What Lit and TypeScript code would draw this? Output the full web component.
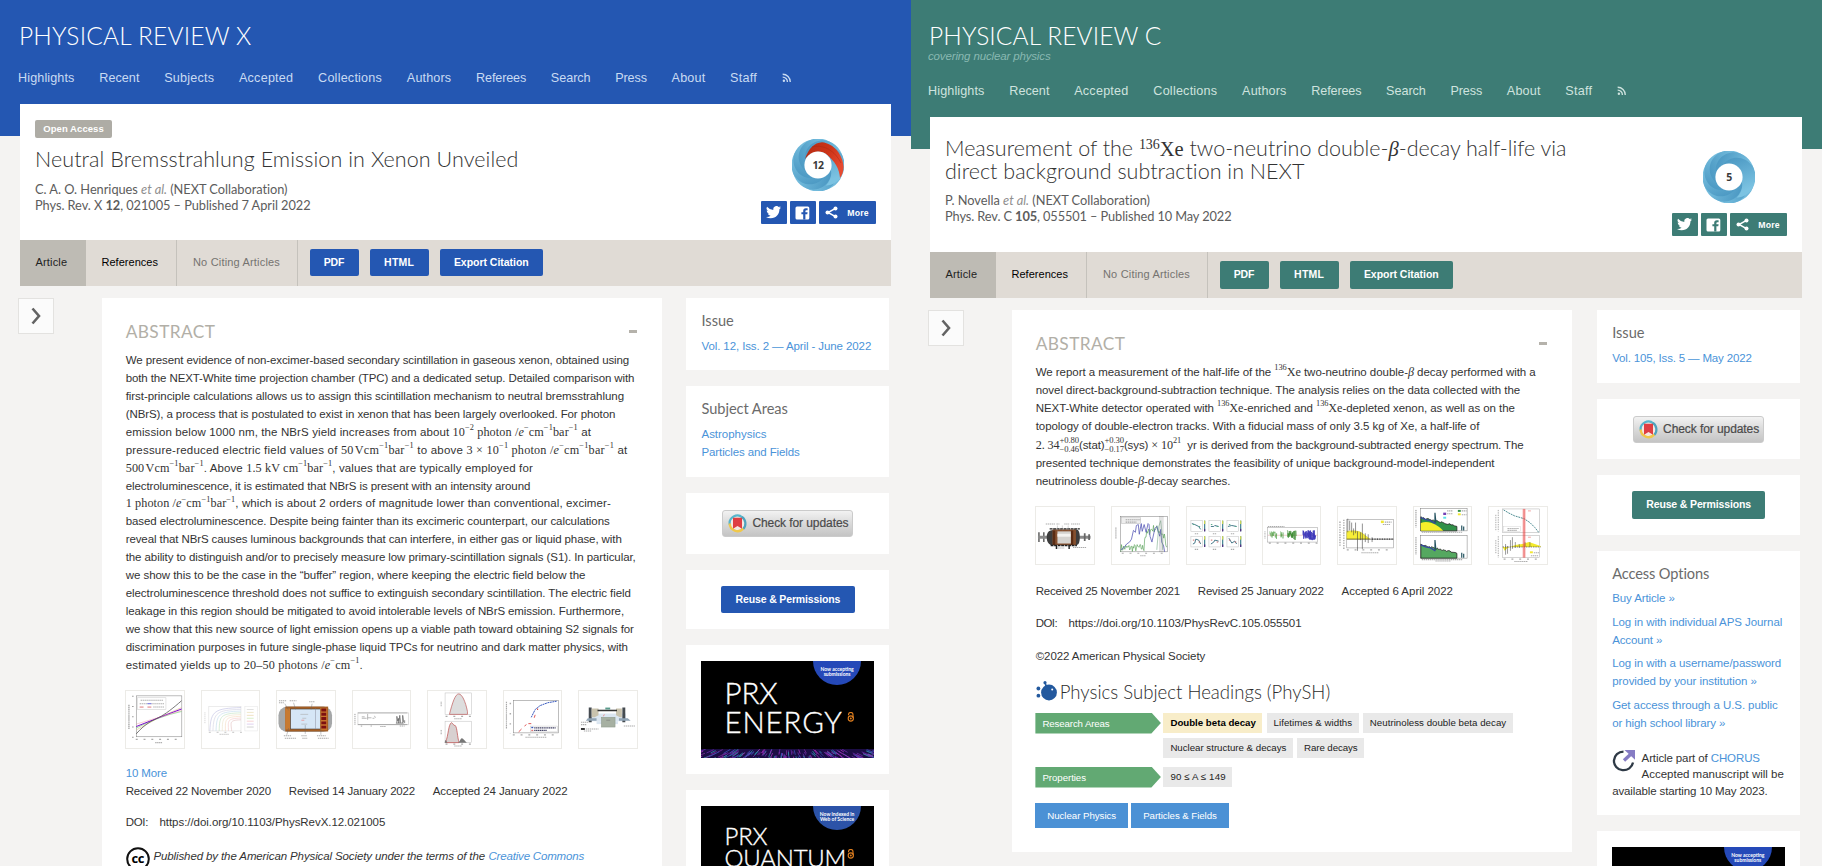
import { LitElement, html, svg, css, nothing } from "lit";
import { customElement, property } from "lit/decorators.js";

/* One line of text tracked so that it fills a measure of `w` pixels. */
@customElement("fit-line")
class FitLine extends LitElement {
  @property({ type: Number }) w = 0;
  static styles = css`
    :host { display: inline-block; white-space: nowrap; vertical-align: top; flex: none; }
    .in { display: inline-block; white-space: nowrap; }
  `;
  firstUpdated() {
    if (!this.w) return;
    const el = this.renderRoot.querySelector(".in") as HTMLElement;
    const n = Math.max(1, (this.textContent || "").replace(/\s+/g, " ").trim().length);
    let spacing = 0;
    for (let i = 0; i < 3; i++) {
      spacing += (this.w - el.getBoundingClientRect().width) / n;
      el.style.letterSpacing = spacing.toFixed(4) + "px";
    }
    this.style.width = this.w + "px";
  }
  render() { return html`<span class="in"><slot></slot></span>`; }
}

const fit = (w: number, content: unknown, cls = "") =>
  html`<fit-line class=${cls} .w=${w}>${content}</fit-line>`;

const noise = (seed: number) => {
  let s = seed;
  return () => ((s = (s * 16807) % 2147483647) / 2147483647);
};
const jag = (seed: number, x0: number, x1: number, step: number, f: (t: number, r: number) => number) => {
  const r = noise(seed);
  const pts: string[] = [];
  for (let x = x0; x <= x1; x += step) pts.push(`${x.toFixed(1)},${f((x - x0) / (x1 - x0), r()).toFixed(1)}`);
  return pts.join(" ");
};

/* ---------- figures ---------- */
const frame = (x: number, y: number, w: number, h: number, c = "#777") =>
  svg`<rect x=${x} y=${y} width=${w} height=${h} fill="none" stroke=${c} stroke-width=".5"/>`;
const ticks = (x: number, y: number, w: number, c = "#888") =>
  svg`<path d=${`M${x} ${y}h${w}`} stroke=${c} stroke-width="1.2" stroke-dasharray="2 6" opacity=".7"/>`;
const label = (x: number, y: number, w: number) =>
  svg`<path d=${`M${x} ${y}h${w}`} stroke="#888" stroke-width="1.1" stroke-dasharray="1.4 .6" opacity=".7"/>`;

const figsX = [
  svg`${frame(10.5, 5, 46.8, 42)}${ticks(10, 49.6, 48)}${label(30, 53, 7)}
    <path d="M3 14v25" stroke="#999" stroke-width="1.2" stroke-dasharray="1.4 .6"/><path d="M7 5v43" stroke="#999" stroke-width="1.5" stroke-dasharray="1 9.5"/>
    <path d="M10.5 38Q34 26 57 21" stroke="#6c6" stroke-width=".6" fill="none"/><path d="M10.5 40Q34 26 57 17" stroke="#db8" stroke-width=".6" fill="none"/>
    <path d="M10.5 36.5Q34 27 57 18.5" stroke="#70c" stroke-width="1" fill="none"/><path d="M10.5 34Q34 27 57 20" stroke="#e9a" stroke-width=".5" fill="none"/>
    <path d="M10.5 44C20 33 28 30 34 27S48 18 57 10" stroke="#555" stroke-width=".8" fill="none"/>
    <rect x="12" y="7" width="29" height="12" fill="#fff" stroke="#bbb" stroke-width=".4"/>${label(15, 9.5, 23)}${label(14, 13, 25)}
    <path d="M14 16.5h4m4 0h4" stroke="#d77"/><path d="M22 13h4" stroke="#77e"/>${label(28, 16.5, 11)}`,
  svg`<g opacity=".55">${frame(7, 16, 33, 25, "#bbb")}${ticks(7, 42.5, 34)}
    ${["#88c", "#aac", "#8bd", "#8c8", "#dc9", "#eb8", "#e99", "#c88"].map((c, i) =>
      svg`<path d=${`M${8 + i * 3.2} ${41}C${9 + i * 3} ${20 + i * 1.8} ${13 + i * 2} ${18 + i * 1.7} 40 ${17 + i * 1.8}`} fill="none" stroke=${c} stroke-width=".6"/>`)}
    ${frame(44, 16, 13, 25, "#ccc")}${[19, 22, 25, 28, 31, 34, 37].map((y, i) => svg`<path d=${`M46 ${y}h7`} stroke=${["#bbb", "#dc8", "#db7", "#ad8", "#e99", "#b9d", "#999"][i]} stroke-width=".8"/>`)}
    ${label(18, 44.5, 10)}<path d="M3 22v12" stroke="#aaa" stroke-dasharray="1 1"/></g>`,
  svg`<rect x="1.5" y="16" width="55" height="26" rx="9" fill="#a5a7a8"/><rect x="8.5" y="16" width="44" height="25.5" fill="#a55f25"/>
    <rect x="8.5" y="18" width="5" height="21.5" fill="#c87a30"/><rect x="14" y="18.5" width="30.5" height="20.5" fill="#d6e6f6" stroke="#444" stroke-width=".6"/>
    <rect x="44.5" y="17.5" width="7" height="22.5" fill="#c8762c"/><path d="M48 18v22" stroke="#7c1010" stroke-width="5" stroke-dasharray="3 1.4"/>
    <path d="M39.500 18v21" stroke="#889" stroke-width=".5"/><path d="M24 24h8M26 28h4M25 34h6" stroke="#aaa" stroke-width=".6"/><path d="M25 30h3" stroke="#e88" stroke-width=".8"/>
    ${label(2, 10, 8)}${label(13, 10, 7)}${label(33, 11, 6)}${label(2, 12, 5)}${label(7, 46, 8)}${label(25, 46, 6)}${label(41, 46, 9)}${label(8, 48.500, 12)}${label(26, 48.500, 5)}${label(42, 48.500, 11)}
    <path d="M8 13l4 7M17 12l2 7M36 13l-1 6M12 38l-2 7M29 35v9M45 38v7" stroke="#666" stroke-width=".4"/>`,
  svg`<path d="M5 22.500h51M5 34.500h51" stroke="#666" stroke-width=".6"/><path d="M5 22v13M57 22v13" stroke="#aaa" stroke-width=".4"/><path d="M2 23.500v11" stroke="#888" stroke-dasharray="1 1"/>
    <path d="M9 26.500h3m3-3v6m0-2h4m3-2l1 2M9 28h5m6 0h2" stroke="#888" stroke-width=".6" fill="none"/>
    <path d="M45 33v-7l1 5 1-3v5l1-8 1 8m2 0v-8l1 7m1-2v3M44 33h8" stroke="#444" stroke-width=".6" fill="none"/>${label(8, 36, 2)}${label(18, 36, 2)}${label(28, 36.500, 6)}${label(48, 36, 5)}`,
  svg`${frame(17.500, 2, 27, 22, "#bbb")}<path d="M22 24C25 12 28 3 31.500 3s7 8 9 18v3z" fill="#ddd" stroke="#b55" stroke-width=".7"/>
    ${ticks(18, 26, 27)}${label(27, 28.500, 8)}<path d="M13.500 11v5" stroke="#999" stroke-dasharray="1 .6"/>
    ${frame(17.500, 31, 27, 22, "#bbb")}<path d="M18 53C21 45 21 34 24 32.500c2 1 2 3 4 3 2 2 2 12 4 17.500z" fill="#d8d0d0" stroke="#b44" stroke-width=".7"/>
    <path d="M31 53c2-1 2-4 3.500-4.500S38 52 40 53zM17 53l1-3 2 3z" fill="#777"/><path d="M13.500 40v5" stroke="#999" stroke-dasharray="1 .6"/>${ticks(18, 54.500, 27)}${label(27, 56.500, 8)}`,
  svg`${frame(10, 10, 46, 33, "#777")}<path d="M28 27l4-8 5-4 8-3 9-1.500" fill="none" stroke="#35b" stroke-width="1" stroke-dasharray="2 .6"/>
    <path d="M15 42l3-3m3-3l2-1.500m2-1h3m3-6l1-3" fill="none" stroke="#d55" stroke-width="1"/><path d="M34.500 19.500v-1.500" stroke="#c33"/>
    <rect x="27" y="36" width="28" height="6" fill="#fff" stroke="#bbb" stroke-width=".4"/><path d="M28 37.500h2" stroke="#35b" stroke-width="1.400"/><path d="M28 40.500h2" stroke="#d77" stroke-width="1.400"/>
    <path d="M31 37.800h22M31 40.500h13" stroke="#446" stroke-width="1.200" stroke-dasharray="1.400 .5"/>${ticks(9, 45, 48)}${label(22, 47.500, 22)}
    <path d="M2.500 11v28" stroke="#aaa" stroke-width="1.200" stroke-dasharray="1.400 .6"/><path d="M6.500 12v32" stroke="#aaa" stroke-width="1.500" stroke-dasharray="1.500 9"/>`,
  svg`<path d="M10 23h38v8H10z" fill="#dbe6f1"/><path d="M18 31h22v3H18z" fill="#dbe6f1"/><path d="M10 17h3v15h-3zM44.500 17h3v15h-3z" fill="#454b50"/><path d="M13 18h7v7l-4 2h-3zM44 18h-6v7l4 2h2z" fill="#c9c3ae"/>
    <path d="M19 20h20" stroke="#333" stroke-width="1.600"/><rect x="27" y="17" width="5" height="2" fill="#5a9b8c"/><path d="M26 24l-1 2" stroke="#e77" stroke-width=".8"/>
    <path d="M9 28h9v2.500H7zM41 28h9l3 2.500H41z" fill="#90a4b5"/><rect x="23" y="27" width="14" height="10" fill="#a6b0a2" stroke="#8a9688" stroke-width=".5"/><path d="M28 30h4" stroke="#777" stroke-width=".6"/>
    ${label(2, 32, 8)}${label(2, 34.500, 6)}<path d="M2 39h4" stroke="#333" stroke-width="2"/>${label(7, 39, 13)}${label(5, 41, 8)}${label(46, 36, 12)}`,
];

const hist = (seed: number, top: number, base: number) => jag(seed, 7, 44, 1, (t, r) => base - (base - top) * (1 - t * 0.62) + r * 1.6);
const figsC = [
  svg`<path d="M3 26v10M8 26v10" stroke="#666" stroke-width="1.600"/><path d="M2 31h13M44 31h12" stroke="#8a8a8a" stroke-width="3"/><path d="M50 27v8M54.500 28v6" stroke="#666" stroke-width="1.800"/>
    <path d="M15 24q-4 1-4 7t4 8h5V23zM39 23v16h3q3-1 3-8t-3-8z" fill="#3d3d3d"/><rect x="17" y="23" width="24" height="16" fill="#85502f"/>
    <rect x="22" y="25" width="14" height="12.500" fill="#d5d3cf"/><path d="M22 29h14" stroke="#f4f3f0" stroke-width="3"/><path d="M37 24v15M18.500 24v15" stroke="#5a2c14" stroke-width="2.400"/>
    <path d="M14 22.500h31M15 39.500h27" stroke="#222" stroke-width="1.400" stroke-dasharray="3 .6"/><path d="M21 40v3M34 40v3" stroke="#222" stroke-width="1.500"/>
    <path d="M22 19v5M27 19v5M33 19v5" stroke="#999" stroke-width=".4"/>${label(10, 17.500, 10)}${label(21, 17.500, 3)}${label(29, 17.500, 5)}${label(36, 17.500, 9)}${label(22, 42, 7)}${label(38, 41.500, 14)}`,
  svg`${frame(8.500, 10, 48.500, 36, "#777")}<polyline points=${jag(7, 9, 57, .7, (t, r) => (t > .5 && t < .95 ? 33 - 10 * Math.sin((t - .5) * 7) : 43) - r * 8 + 3)} fill="none" stroke="#4a9a4a" stroke-width=".6"/>
    <polyline points="9,44 12,42 15,38 18,36 20,33 22,24 24,26 25,19 27,18 28,28 30,17 31,25 33,18 35,26 37,17 38,18 39,30 41,36 44,22 46,20 48,27 49,30 50,23 51,36 53,40 54,46" fill="none" stroke="#5558b5" stroke-width=".8"/>
    <path d="M46 44l2-24 2-6 1 10 1 20" fill="none" stroke="#7a8" stroke-width=".6"/><rect x="48.500" y="10" width="4" height="36" fill="#888" opacity=".22" stroke="#444" stroke-width=".5"/>
    <rect x="9.500" y="11" width="20" height="6" fill="#eee" stroke="#aaa" stroke-width=".4"/>${label(14, 13, 15)}${label(14, 15.500, 11)}${ticks(10, 47.500, 46)}${label(29, 50, 6)}<path d="M4 21v12" stroke="#999" stroke-dasharray="1.400 .6"/>`,
  svg`${[0, 1, 2].map(i => [0, 1].map(j => svg`<g transform=${`translate(${4 + i * 18.5} ${14 + j * 16})`}>${frame(0, 0, 12, 11, "#bbb")}
    <path d=${j ? ["M2 8l2-1 1-4 3 1 2 4", "M2 8l3-2 1-2 4 1", "M2 2l3 5 3-2 2 3"][i] : ["M1 3l3 1 4 2 2 3", "M2 6h3l1-1 4 1", "M1 6l4-1 5 1"][i]} fill="none" stroke="#478" stroke-width="1"/>
    <path d="M2 4h1.500M8 6h1.500" stroke=${j ? "#c66" : "#5a8"}/><rect x="13.500" y="0" width="1.200" height="11" fill="#3b7f8c"/><rect x="13.500" y="0" width="1.200" height="3.500" fill="#d8dc50"/><rect x="13.500" y="8.500" width="1.200" height="2.500" fill="#54287e"/>${label(4, 13.500, 4)}</g>`))}`,
  svg`${frame(4.500, 21, 51.500, 15, "#999")}<path d="M5 29h51" stroke="#d99" stroke-width=".5"/>
    <polyline points=${jag(3, 7, 14, .25, (_t, r) => 25 + r * 8)} fill="none" stroke="#4b9b3f" stroke-width=".5"/><polyline points=${jag(5, 18, 21, .25, (_t, r) => 25 + r * 8)} fill="none" stroke="#4b9b3f" stroke-width=".5"/>
    <polyline points=${jag(8, 25, 34, .2, (_t, r) => 24 + r * 10)} fill="none" stroke="#3b8b30" stroke-width=".7"/><polyline points=${jag(11, 41, 54, .2, (_t, r) => 24 + r * 10)} fill="none" stroke="#3a35b8" stroke-width=".8"/>
    ${label(5, 20, 17)}${ticks(6, 37, 50)}<path d="M2 25v8" stroke="#aaa" stroke-dasharray="1 .6"/>`,
  svg`${frame(9, 13, 48, 29, "#888")}<path d="M9 33V25q4-1 8-.5 6 0 10 4l6 4.500z" fill="#f7ee37" stroke="#c9bf2c" stroke-width=".4"/><path d="M9 33h48" stroke="#222" stroke-width=".6"/>
    <path d="M10 12v14M12 14v10M14 16v10M16 22v7M18 16v11M20 25v20M23 26v8M25 17v26M28 27v9M31 28v9M35 31v5" stroke="#444" stroke-width=".6"/><path d="M35 33h22" stroke="#333" stroke-width="1.200" stroke-dasharray="1 1.500"/>
    <rect x="44" y="14" width="3" height="2.500" fill="#f2e733"/>${label(48, 15.500, 7)}${label(46, 18, 8)}${ticks(9, 44, 48)}${label(24, 47, 18)}<path d="M2 15v26M6 13v30" stroke="#999" stroke-width="1.200" stroke-dasharray="1.400 1.200"/>`,
  svg`${[0, 28].map((y, k) => svg`<g transform=${`translate(0 ${y})`}>${frame(6.500, 1.500, 48, 23, "#777")}
    <polygon points=${`7,24.5 ${hist(9 + k, 10, 24)} 44,24.5`} fill=${k ? "#55a860" : "#319149"} stroke="#222" stroke-width=".8"/>
    <path d="M7 11l5 2 5 1 5 3" stroke="#3846a0" stroke-width="1.400" fill="none"/>${k ? nothing : svg`<path d="M7 24.500v-8q5-2 11 0 8 3 12 8z" fill="#f6ef29"/>`}
    <path d="M21.500 16V6l1 10M49 24v-5M51 24v-4" stroke="#23525f" stroke-width="1.200" fill="none"/>${label(8, 26, 42)}<path d="M2 3v18" stroke="#888" stroke-dasharray="1.400 .8"/></g>`)}
    <path d="M30 7h3" stroke="#7340b5" stroke-width="2.400"/><path d="M30 11h3" stroke="#5ce1e8" stroke-width="2"/><path d="M45 4h3" stroke="#319149" stroke-width="2"/><path d="M45 7.500h3" stroke="#f2e733" stroke-width="2"/>${label(34, 7, 6)}${label(49, 4, 5)}${label(34, 4, 6)}${label(49, 8, 5)}${label(22, 55.500, 16)}`,
  svg`${frame(14, 2, 38, 24, "#aaa")}<path d="M15 3l5 3 6 3 10 3 6 4 5 5 4 5" fill="none" stroke="#4a8a90" stroke-width="1" stroke-dasharray="2 .8"/>
    <rect x="15" y="20" width="17" height="5" fill="#fff" stroke="#ccc" stroke-width=".4"/>${label(19, 22, 12)}${label(19, 24, 10)}${frame(14, 29, 38, 23, "#aaa")}
    <path d="M14 41l2 4 3-3 8-3 7-1 7-2 6 2 6 2v1z" fill="#f3ea2c"/><path d="M14 41h39" stroke="#555" stroke-width=".8" stroke-dasharray="1.400 1"/><path d="M17 38v11M19 40v8M22 34v11M24 31v12M27 36v6M31 38v4M37 36v5M42 36v5" stroke="#555" stroke-width=".6"/>
    <rect x="34.500" y="2" width="3" height="50" fill="#f05050" opacity=".45"/><path d="M36 2v50" stroke="#d33" stroke-width=".5"/><path d="M40 4h3M40 31h3" stroke="#f3a3a3"/>
    <rect x="42" y="45.500" width="3" height="2" fill="#f2e733"/>${label(46, 47, 6)}${label(43, 50, 8)}${ticks(15, 53.500, 38)}${label(26, 56, 14)}<path d="M7 8v16M9.500 3v22M7 34v14M9.500 30v22" stroke="#aaa" stroke-dasharray="1.400 1"/>`,
];

/* ---------- icons ---------- */
const rss = html`<svg class="rss" viewBox="0 0 10 10"><circle cx="2" cy="8.200" r="1.300"/><path d="M.7 4.300A5 5 0 0 1 5.700 9.400M.7 1.300A8 8 0 0 1 8.700 9.400" fill="none" stroke="currentColor" stroke-width="1.400"/></svg>`;
const twitter = html`<svg width="15" height="12.500" viewBox="0 0 24 20"><path fill="#fff" d="M24 2.400a10 10 0 0 1-2.800.8A5 5 0 0 0 23.300.5a10 10 0 0 1-3.100 1.200A4.900 4.900 0 0 0 11.800 6.200 14 14 0 0 1 1.700 1a4.900 4.900 0 0 0 1.500 6.600A5 5 0 0 1 1 7v.1A4.900 4.900 0 0 0 4.900 12a5 5 0 0 1-2.200 0A4.900 4.900 0 0 0 7.300 15.500 10 10 0 0 1 0 17.500 14 14 0 0 0 7.500 19.700c9.100 0 14.300-7.700 14-14.700A10 10 0 0 0 24 2.400z"/></svg>`;
const facebook = html`<svg width="15" height="14" viewBox="0 0 15 14"><rect x=".5" y=".5" width="13.800" height="13" rx="1.500" fill="#fff"/><path d="M8.200 13.500V8.300H6.400V6.200h1.800V4.800q0-2.500 2.600-2.500h1.800v2h-1.300q-.9 0-.9.900v1h2.200l-.3 2.100h-1.900v5.200z" fill="var(--accent)"/></svg>`;
const share = html`<svg width="13" height="13" viewBox="0 0 13 13"><path d="M10.500 2.300 3 6.500l7.500 4.200" fill="none" stroke="#fff" stroke-width="1.500"/><g fill="#fff"><circle cx="2.500" cy="6.500" r="2"/><circle cx="10.500" cy="2.400" r="2"/><circle cx="10.500" cy="10.600" r="2"/></g></svg>`;

const donut = (score: string, red: boolean) => html`<svg class="donut" viewBox="-26 -26 52 52">
  <defs>
    <linearGradient id="b" x1="0" y1="0" x2="1" y2=".4"><stop offset="0" stop-color="#4593bf"/><stop offset="1" stop-color="#7cc3e2"/></linearGradient>
    <linearGradient id="r" x1="0" y1="0" x2="1" y2=".5"><stop offset="0" stop-color="#b42c14"/><stop offset=".6" stop-color="#cd3418"/><stop offset="1" stop-color="#e64a30"/></linearGradient>
  </defs>
  <circle r="24.700" fill="#62add2"/>
  ${[2, 3, 4, 5, 6, 7, 8, 9].map(i => svg`<path transform=${`rotate(${i * 45})`} d="M-13-3C-15-17-4-26 8-24.500 17-23 25-14 25.400-4 25 2 22 7 20 9 20-4 8-15-13-3z" fill="url(#b)"/>`)}
  ${red ? svg`<path d="M-13-6C-9-17-4-22 4-22.700 16-21.500 25-10 25.600 2 25.400 6 24.500 10 22 13 21.500 4 17-4 8-11 2-15-6-14-13-6z" fill="url(#r)"/><path d="M-6-18C6-21 17-14 23-2" fill="none" stroke="#a82712" stroke-width=".8" opacity=".6"/>` : nothing}
  <circle r="13.600" fill="#fff"/><text y="4" text-anchor="middle" class="score">${score}</text></svg>`;

const crossmark = html`<svg class="cm" viewBox="0 0 19 19"><circle cx="9.400" cy="9.300" r="7" fill="#f4e8e2"/><path d="M1.700 10.500A7.800 7.800 0 0 1 14.500 3.500" fill="none" stroke="#57b5cc" stroke-width="2.200"/><path d="M14 3a7.900 7.900 0 0 1 1 12.200" fill="none" stroke="#4fa3bd" stroke-width="2.200"/><path d="M1.700 9.500a7.900 7.900 0 0 0 13.600 5.200" fill="none" stroke="#f0c84b" stroke-width="2.400"/><path d="M5 3.800h9v11L9.500 12 5 14.800z" fill="#df3e42"/></svg>`;
const chorus = html`<svg class="chorus" viewBox="0 0 23 22"><path d="M11.500 1.600A9.600 9.300 0 1 0 21 12.500" fill="none" stroke="#2f3a46" stroke-width="2.300"/><path d="M12 10.500 19 4" stroke="#867cc4" stroke-width="3.400"/><path d="M12.500 0H23v9.800z" fill="#867cc4"/></svg>`;
const physh = html`<svg class="physh" viewBox="0 0 21 20"><g fill="#23599e"><circle cx="13" cy="11.500" r="7.900"/><circle cx="2.400" cy="7.500" r="1.900"/><circle cx="2.400" cy="14.700" r="1.900"/><circle cx="9" cy="1.700" r="1.600"/><path d="M8.500 2l4 3-3 2z"/></g><circle cx="16.200" cy="8.500" r="1" fill="#fff"/></svg>`;
const chevron = html`<svg width="12" height="18" viewBox="0 0 12 18"><path d="M2.500 1.500 9 9l-6.500 7.500" fill="none" stroke="#636363" stroke-width="2.600"/></svg>`;
const lock = html`<svg class="lock" viewBox="0 0 8 10"><path d="M1.500 3.200V2.600A2 2 0 0 1 6 2.800V6" fill="none" stroke="#e07f1f" stroke-width="1.100"/><circle cx="3.800" cy="6.500" r="2.600" fill="none" stroke="#e07f1f" stroke-width="1.100"/><circle cx="3.800" cy="6.500" r="1" fill="#e07f1f"/></svg>`;

const burst = () => {
  const r = noise(42);
  return html`<svg class="burst" viewBox="0 0 173 9.500" preserveAspectRatio="none"><rect width="173" height="10" fill="#1c0d45"/>
    ${Array.from({ length: 190 }, () => {
      const x = r() * 173, y = r() * 9, k = (x - 86) / 26, l = 2 + r() * 3;
      return svg`<path d=${`M${x} ${y}l${k * l * 0.8} ${l}`} stroke=${["#a32fb8", "#6b2ba8", "#3b50b5", "#2c8fa6", "#7d2d9b"][Math.floor(r() * 5)]} stroke-width=".8"/>`;
    })}</svg>`;
};

/* ---------- math ---------- */
const m = (c: unknown) => html`<span class="m">${c}</span>`;
const inv = html`<sup>−1</sup>`;
const perE = html`/<i>e</i><sup>−</sup>`;
const xe = m(html`<sup>136</sup>Xe`);
const beta = html`<i class="m">β</i>`;

const abstractX: [number, unknown][] = [
  [503.5, "We present evidence of non-excimer-based secondary scintillation in gaseous xenon, obtained using"],
  [508.7, "both the NEXT-White time projection chamber (TPC) and a dedicated setup. Detailed comparison with"],
  [498.3, "first-principle calculations allows us to assign this scintillation mechanism to neutral bremsstrahlung"],
  [489.6, "(NBrS), a process that is postulated to exist in xenon that has been largely overlooked. For photon"],
  [465.3, html`emission below 1000 nm, the NBrS yield increases from about ${m(html`10<sup>−2</sup> photon ${perE}cm${inv}bar${inv}`)} at`],
  [501.8, html`pressure-reduced electric field values of ${m(html`50&#8202;Vcm${inv}bar${inv}`)} to above ${m(html`3 × 10${inv} photon ${perE}cm${inv}bar${inv}`)} at`],
  [407.2, html`${m(html`500&#8202;Vcm${inv}bar${inv}`)}. Above ${m(html`1.5 kV cm${inv}bar${inv}`)}, values that are typically employed for`],
  [404.6, "electroluminescence, it is estimated that NBrS is present with an intensity around"],
  [485.2, html`${m(html`1 photon ${perE}cm${inv}bar${inv}`)}, which is about 2 orders of magnitude lower than conventional, excimer-`],
  [484, "based electroluminescence. Despite being fainter than its excimeric counterpart, our calculations"],
  [496, "reveal that NBrS causes luminous backgrounds that can interfere, in either gas or liquid phase, with"],
  [510, "the ability to distinguish and/or to precisely measure low primary-scintillation signals (S1). In particular,"],
  [459.7, "we show this to be the case in the “buffer” region, where keeping the electric field below the"],
  [505.2, "electroluminescence threshold does not suffice to extinguish secondary scintillation. The electric field"],
  [498.3, "leakage in this region should be mitigated to avoid intolerable levels of NBrS emission. Furthermore,"],
  [508.2, "we show that this new source of light emission opens up a viable path toward obtaining S2 signals for"],
  [502.2, "discrimination purposes in future single-phase liquid TPCs for neutrino and dark matter physics, with"],
  [237.2, html`estimated yields up to ${m(html`20–50 photons ${perE}cm${inv}`)}.`],
];
const stack = (a: string, b: string) => html`<span class="stack m"><span>${a}</span><span>${b}</span></span>`;
const abstractC: [number, unknown][] = [
  [500, html`We report a measurement of the half-life of the ${xe} two-neutrino double-${beta} decay performed with a`],
  [484.4, "novel direct-background-subtraction technique. The analysis relies on the data collected with the"],
  [479.2, html`NEXT-White detector operated with ${xe}-enriched and ${xe}-depleted xenon, as well as on the`],
  [443.6, "topology of double-electron tracks. With a fiducial mass of only 3.5 kg of Xe, a half-life of"],
  [487.9, html`${m("2. 34")}${stack("+0.80", "−0.46")}(stat)${stack("+0.30", "−0.17")}(sys) ${m(html`× 10<sup>21</sup>`)}&nbsp; yr is derived from the background-subtracted energy spectrum. The`],
  [458.8, "presented technique demonstrates the feasibility of unique background-model-independent"],
  [194.7, html`neutrinoless double-${beta}-decay searches.`],
];

@customElement("journal-page")
class JournalPage extends LitElement {
  @property() kind: "x" | "c" = "x";
  static styles = css`
    :host { display: block; width: 911px; height: 866px; overflow: hidden; font: 11.5px "Liberation Sans", Arial, sans-serif; color: #333; }
    * { box-sizing: border-box; }
    .page { height: 866px; overflow: hidden; }
    .x { --accent: #2457b2; padding-left: 20px; background: linear-gradient(var(--accent) 136px, #f4f3f2 136px); }
    .c { --accent: #3d7c75; padding-left: 19px; background: linear-gradient(var(--accent) 149px, #f4f3f2 149px); }
    header { padding-top: 21px; height: 104px; color: #fff; margin-left: -2px; }
    .c header { height: 117px; }
    .brand { display: block; font: 300 24.500px/30px Lato, sans-serif; margin-left: 1px; }
    .tag { display: block; font: italic 11.500px/12px "Liberation Sans", sans-serif; color: #89b9b2; margin-top: -1px; }
    nav { display: flex; gap: 24.750px; margin-top: 19px; font-size: 12.600px; line-height: 16px; color: #c9dbf2; }
    .c nav { margin-top: 21px; color: #cfe3df; }
    .rss { width: 9.500px; height: 9.500px; margin-top: 2.500px; fill: currentColor; }
    .mast { width: 871px; height: 136px; background: #fff; display: flex; justify-content: space-between; padding: 16px 15.500px 0 15px; }
    .c .mast { width: 872px; height: 135px; padding-top: 20px; }
    .mast-l { display: flex; flex-direction: column; align-items: flex-start; }
    .oa { background: #aeaca5; border-radius: 2px; width: 77px; height: 18px; margin-bottom: 8px; display: flex; justify-content: center; font: bold 9.500px/18px "Liberation Sans", sans-serif; color: #fff; }
    .h1 { font: 300 21.500px/26px Lato, sans-serif; color: #333; }
    .c .h1 { line-height: 22.500px; }
    .h1 .m { font-weight: 400; font-size: 20.500px; line-height: 0; }
    .h1 sup { font-size: 14px; top: -7px; }
    .by { font: 12.800px/16px Lato, sans-serif; color: #5c5c5c; }
    .gap { margin-top: 9px; }
    .c .gap { margin-top: 10px; }
    .by em { color: #8f8f8f; }
    .mast-r { display: flex; flex-direction: column; align-items: center; padding-top: 19px; width: 114.500px; }
    .c .mast-r { padding-top: 14px; }
    .donut { width: 52px; height: 52px; margin-bottom: 10px; flex: none; display: block; }
    .score { font: bold 10.500px "Open Sans", sans-serif; fill: #3a3a3a; letter-spacing: -.5px; }
    .social { display: flex; gap: 2.800px; width: 114.500px; }
    .social span { background: var(--accent); height: 23px; width: 26px; border-radius: 1px; display: flex; align-items: center; justify-content: center; }
    .social .more { width: 57px; gap: 9px; color: #fff; font: bold 8.700px "Liberation Sans", sans-serif; }
    .tabs { width: 871px; height: 46px; background: #e0dbd5; display: flex; font-size: 11px; line-height: 45px; color: #222; }
    .c .tabs { width: 872px; }
    .tab { height: 46px; padding-left: 15.500px; }
    .t1 { width: 65.500px; background: #bebbb4; }
    .t2 { width: 91px; border-right: 1.500px solid #c5c2bc; padding-left: 16px; color: #000; }
    .t3 { width: 121px; border-right: 1.500px solid #c5c2bc; color: #757370; padding-left: 16.500px; }
    .btn { background: var(--accent); border-radius: 2px; color: #fff; font: bold 10.500px/26px "Liberation Sans", sans-serif; height: 27px; display: flex; justify-content: center; margin-top: 9px; }
    .c .btn { height: 28px; line-height: 27px; }
    .bp { width: 49px; margin-left: 12px; } .bh { width: 59.300px; margin-left: 11px; } .be { width: 103px; margin-left: 11px; }
    .cols { display: flex; align-items: flex-start; margin-top: 12px; }
    .toggle { width: 36px; height: 35.500px; margin-left: -2px; background: #fbfbfb; border: 1px solid #e3e2e0; display: flex; align-items: center; justify-content: center; flex: none; }
    .art { width: 560px; margin-left: 47.500px; background: #fff; padding: 24.400px 0 0 24.200px; height: 580px; flex: none; display: flex; flex-direction: column; align-items: flex-start; }
    .c .art { height: 542px; }
    .ah { display: flex; justify-content: space-between; width: 511.500px; height: 28.600px; font: 17.300px/20px Lato, sans-serif; color: #b2afa7; }
    .minus { width: 8px; height: 3px; background: #b5b2ab; margin-top: 7.600px; }
    .ln { line-height: 18px; height: 17.940px; }
    .art .ln { color: #333; }
    .tall { padding-top: 1px; height: 19px; }
    .m { font-family: "Liberation Serif", "Times New Roman", serif; font-size: 12.200px; }
    sup { font-size: 8.300px; line-height: 0; vertical-align: baseline; position: relative; top: -5.500px; }
    .stack { display: inline-flex; flex-direction: column; font-size: 8.600px; line-height: 9px; vertical-align: middle; margin: -3px 0 -1px; }
    .thumbs { display: flex; gap: 15.950px; margin: 16.300px 0 15px -.3px; }
    .c .thumbs { margin-bottom: 17px; margin-top: 16.500px; }
    .thumbs svg { width: 59.500px; height: 58.500px; border: 1.300px solid #ecebe7; background: #fff; display: block; }
    .row { display: flex; height: 18px; line-height: 18px; }
    a { color: #4a93d9; }
    .dates { gap: 17.800px; }
    .doi { gap: 11.300px; margin-top: 13.500px; }
    .c .doi { margin-top: 14px; }
    .cr { margin-top: 15.700px; }
    .cc { margin-top: 15.700px; font-style: italic; gap: 3.500px; }
    .cc svg { width: 24px; height: 24px; flex: none; margin-right: .3px; }
    .cct { font: bold 13px "Open Sans", sans-serif; letter-spacing: -.4px; }
    .ps { height: 24px; margin-top: 14.300px; font: 300 18.600px/24px Lato, sans-serif; color: #2c2c2c; gap: 3px; }
    .physh { width: 21px; height: 20px; margin-top: 1px; }
    .trow { display: flex; gap: 2.500px; margin-left: -.3px; font-size: 9.700px; margin-top: 9px; }
    .green { background: #62a973; color: #fff; width: 125.500px; height: 21px; line-height: 22px; padding-left: 7px; clip-path: polygon(0 0, 116px 0, 100% 50%, 116px 100%, 0 100%); flex: none; }
    .chips { display: flex; flex-wrap: wrap; gap: 5px 4.200px; width: 360px; }
    .chip { background: #e9e9e9; height: 20px; line-height: 20px; padding: 0 6.500px 0 7px; color: #222; }
    .hot { background: #f8edc9; font-weight: bold; color: #000; }
    .blues { display: flex; gap: 3px; margin: 15px 0 0 -.5px; }
    .blue { background: #4b91d5; color: #fff; height: 25px; line-height: 26px; padding: 0 12px; font-size: 9.700px; }
    aside { margin-left: 24.800px; width: 203.200px; display: flex; flex-direction: column; gap: 16px; }
    .c aside { margin-left: 25.500px; }
    .card { background: #fff; padding: 14.300px 0 0 15.200px; }
    .card .h { display: block; font: 14.600px/18px Lato, sans-serif; color: #6b6b6b; margin-bottom: 6.600px; }
    .card .l { display: block; height: 17.700px; line-height: 18px; color: #4a93d9; }
    .i1 { height: 72px; } .i2 { height: 91px; } .i3 { height: 61px; } .i4 { height: 59px; }
    .c .i1 { height: 73px; } .c .i3 { height: 60px; } .c .i4 { height: 60px; }
    .acc { height: 264px; }
    .acc .h { margin-bottom: 6px; }
    .acc .p { margin-bottom: 5.400px; } .acc .p .l { height: 18.100px; }
    .ch { display: flex; margin-top: 16.500px; line-height: 18px; }
    .ch .l, .card .last { height: 16.500px; }
    .card .k { color: #333; }
    .chorus { width: 23px; height: 22px; margin: 1px 6.400px 0 0; flex: none; }
    .mid { padding: 16.500px 0 0; display: flex; justify-content: center; align-items: flex-start; }
    .i4.mid { padding-top: 16px; } .i4 .btn { width: 133.500px; margin: 0; }
    .chk { width: 131px; height: 27px; border: 1px solid #cbcbcb; border-radius: 3px; background: linear-gradient(#f2f2f2, #dcdcdc 45%, #c4c4c4); display: flex; padding: 0 0 0 4.500px; color: #4a4a4a; font: 12px/24px "Liberation Sans", sans-serif; -webkit-text-stroke: .2px #4a4a4a; }
    .cm { width: 19px; height: 19px; margin: 3px 5.500px 0 0; }
    .adp { padding: 16px 0 0 14.800px; height: 129px; flex: none; }
    .ad { width: 173px; height: 97px; background: #000; overflow: hidden; display: flex; flex-direction: column; color: #fff; position: relative; padding: 18px 0 0 23.500px; }
    .ad .a1 { font: 300 29.500px/28px Lato, sans-serif; height: 28px; -webkit-text-stroke: .35px #fff; }
    .ad .a2 { font: 300 29.500px/29px Lato, sans-serif; -webkit-text-stroke: .35px #fff; }
    .ad.quant { padding-top: 18px; }
    .quant .a1 { font-size: 24px; line-height: 24px; height: 22px; } .quant .a2 { font-size: 24px; line-height: 24px; }
    .adl { display: flex; gap: 4.500px; } .lock { width: 8px; height: 10px; margin-top: 5px; }
    .quant .adl { gap: 1px; } .quant .lock { margin-top: 3px; }
    .badge { position: absolute; left: 112px; top: -24px; width: 48px; height: 48px; border-radius: 50%; background: #2549b8; text-align: center; font: bold 5px/5.300px Lato, sans-serif; padding-top: 30px; white-space: nowrap; }
    .quant .badge { background: #2c53a8; }
    .burst { position: absolute; left: 0; bottom: 0; width: 173px; height: 9.500px; }
  `;

  navItems() {
    const w: Record<string, number> = { Highlights: 56.5, Recent: 40.2, Subjects: 50, Accepted: 54.4, Collections: 64, Authors: 44.5, Referees: 50, Search: 39.7, Press: 31.6, About: 33.7, Staff: 26.9 };
    return Object.keys(w).filter(k => this.kind === "x" || k !== "Subjects").map(k => fit(w[k], k));
  }
  chip(w: number, t: string, hot = false) { return html`<span class="chip ${hot ? "hot" : ""}">${fit(w, t)}</span>`; }
  ad(energy: boolean) {
    return html`<div class="card adp"><div class="ad ${energy ? "" : "quant"}">
      <div class="badge">${energy ? html`Now accepting<br>submissions` : html`Now indexed in<br>Web of Science`}</div>
      ${fit(energy ? 53 : 42.5, "PRX", "a1")}<div class="adl">${fit(energy ? 118 : 121.5, energy ? "ENERGY" : "QUANTUM", "a2")}${lock}</div>
      ${energy ? burst() : nothing}</div></div>`;
  }
  render() {
    const x = this.kind === "x";
    return html`<div class="page ${this.kind}">
      <header>${fit(232.5, x ? "PHYSICAL REVIEW X" : "PHYSICAL REVIEW C", "brand")}
        ${x ? nothing : fit(122.5, "covering nuclear physics", "tag")}
        <nav>${this.navItems()}${rss}</nav></header>
      <section class="mast">
        <div class="mast-l">
          ${x ? html`<div class="oa">${fit(60.5, "Open Access")}</div>${fit(483.5, "Neutral Bremsstrahlung Emission in Xenon Unveiled", "h1")}
            ${fit(252.5, html`C. A. O. Henriques <em>et al.</em> (NEXT Collaboration)`, "by gap")}
            ${fit(275.5, html`Phys. Rev. X <b>12</b>, 021005 – Published 7 April 2022`, "by")}`
          : html`${fit(621.5, html`Measurement of the ${m(html`<sup>136</sup>Xe`)} two-neutrino double-${beta}-decay half-life via`, "h1")}
            ${fit(359.5, "direct background subtraction in NEXT", "h1")}
            ${fit(205, html`P. Novella <em>et al.</em> (NEXT Collaboration)`, "by gap")}
            ${fit(286.5, html`Phys. Rev. C <b>105</b>, 055501 – Published 10 May 2022`, "by")}`}
        </div>
        <div class="mast-r">${donut(x ? "12" : "5", x)}
          <div class="social"><span>${twitter}</span><span>${facebook}</span><span class="more">${share}${fit(21.5, "More")}</span></div></div>
      </section>
      <div class="tabs"><div class="tab t1">${fit(31.7, "Article")}</div><div class="tab t2">${fit(56.5, "References")}</div><div class="tab t3">${fit(87, "No Citing Articles")}</div>
        <div class="btn bp">${fit(20.5, "PDF")}</div><div class="btn bh">${fit(30.2, "HTML")}</div><div class="btn be">${fit(74.8, "Export Citation")}</div></div>
      <div class="cols">
        <div class="toggle">${chevron}</div>
        <article class="art">
          <div class="ah">${fit(89.6, "ABSTRACT")}<span class="minus"></span></div>
          ${(x ? abstractX : abstractC).map(([w, t], i) => fit(w, t, !x && i === 4 ? "ln tall" : "ln"))}
          <div class="thumbs">${(x ? figsX : figsC).map(f => html`<svg viewBox="0 0 59 58">${f}</svg>`)}</div>
          ${x ? html`<div class="row"><a>${fit(41.3, "10 More")}</a></div>
            <div class="row dates">${fit(145.3, "Received 22 November 2020")}${fit(126.2, "Revised 14 January 2022")}${fit(134.8, "Accepted 24 January 2022")}</div>
            <div class="row doi">${fit(22.5, "DOI:")}${fit(225.8, "https://doi.org/10.1103/PhysRevX.12.021005")}</div>
            <div class="row cc"><svg viewBox="0 0 24 24"><circle cx="12" cy="12" r="10.800" fill="#fff" stroke="#111" stroke-width="2"/><text x="11.800" y="16" text-anchor="middle" class="cct">cc</text></svg>
              ${fit(331.5, "Published by the American Physical Society under the terms of the")}<a>${fit(95.5, "Creative Commons")}</a></div>`
          : html`<div class="row dates">${fit(144.3, "Received 25 November 2021")}${fit(126, "Revised 25 January 2022")}${fit(111.3, "Accepted 6 April 2022")}</div>
            <div class="row doi">${fit(21.5, "DOI:")}${fit(233, "https://doi.org/10.1103/PhysRevC.105.055501")}</div>
            <div class="row cr">${fit(169.5, "©2022 American Physical Society")}</div>
            <div class="row ps">${physh}${fit(270.5, "Physics Subject Headings (PhySH)")}</div>
            <div class="trow"><div class="green">${fit(67.2, "Research Areas")}</div><div class="chips">${this.chip(85.5, "Double beta decay", true)}${this.chip(78.6, "Lifetimes & widths")}${this.chip(136.3, "Neutrinoless double beta decay")}${this.chip(116, "Nuclear structure & decays")}${this.chip(53.5, "Rare decays")}</div></div>
            <div class="trow"><div class="green">${fit(43.6, "Properties")}</div><div class="chips">${this.chip(55.3, "90 ≤ A ≤ 149")}</div></div>
            <div class="blues"><div class="blue">${fit(69, "Nuclear Physics")}</div><div class="blue">${fit(73.6, "Particles & Fields")}</div></div>`}
        </article>
        <aside>
          <div class="card i1">${fit(32.3, "Issue", "h")}${x ? fit(169.7, "Vol. 12, Iss. 2 — April - June 2022", "l") : fit(139.5, "Vol. 105, Iss. 5 — May 2022", "l")}</div>
          ${x ? html`<div class="card i2">${fit(86.3, "Subject Areas", "h")}${fit(65, "Astrophysics", "l")}${fit(98.2, "Particles and Fields", "l")}</div>` : nothing}
          <div class="card i3 mid"><div class="chk">${crossmark}${fit(96, "Check for updates")}</div></div>
          <div class="card i4 mid"><div class="btn">${fit(104.7, "Reuse & Permissions")}</div></div>
          ${x ? html`${this.ad(true)}${this.ad(false)}` : html`<div class="card acc">${fit(97, "Access Options", "h")}
            <div class="p">${fit(62.5, "Buy Article »", "l")}</div>
            <div class="p">${fit(170, "Log in with individual APS Journal", "l")}${fit(50, "Account »", "l")}</div>
            <div class="p">${fit(169, "Log in with a username/password", "l")}${fit(144.7, "provided by your institution »", "l")}</div>
            <div class="p">${fit(165.5, "Get access through a U.S. public", "l")}${fit(113, "or high school library »", "l")}</div>
            <div class="ch">${chorus}<div>${fit(118.3, html`Article part of <a>CHORUS</a>`, "l k")}${fit(142.2, "Accepted manuscript will be", "l k")}</div></div>
            ${fit(155.5, "available starting 10 May 2023.", "l k last")}</div>${this.ad(true)}`}
        </aside>
      </div></div>`;
  }
}

@customElement("app-root")
class AppRoot extends LitElement {
  static styles = css`:host { display: flex; width: 1822px; height: 866px; overflow: hidden; }`;
  render() { return html`<journal-page kind="x"></journal-page><journal-page kind="c"></journal-page>`; }
}
